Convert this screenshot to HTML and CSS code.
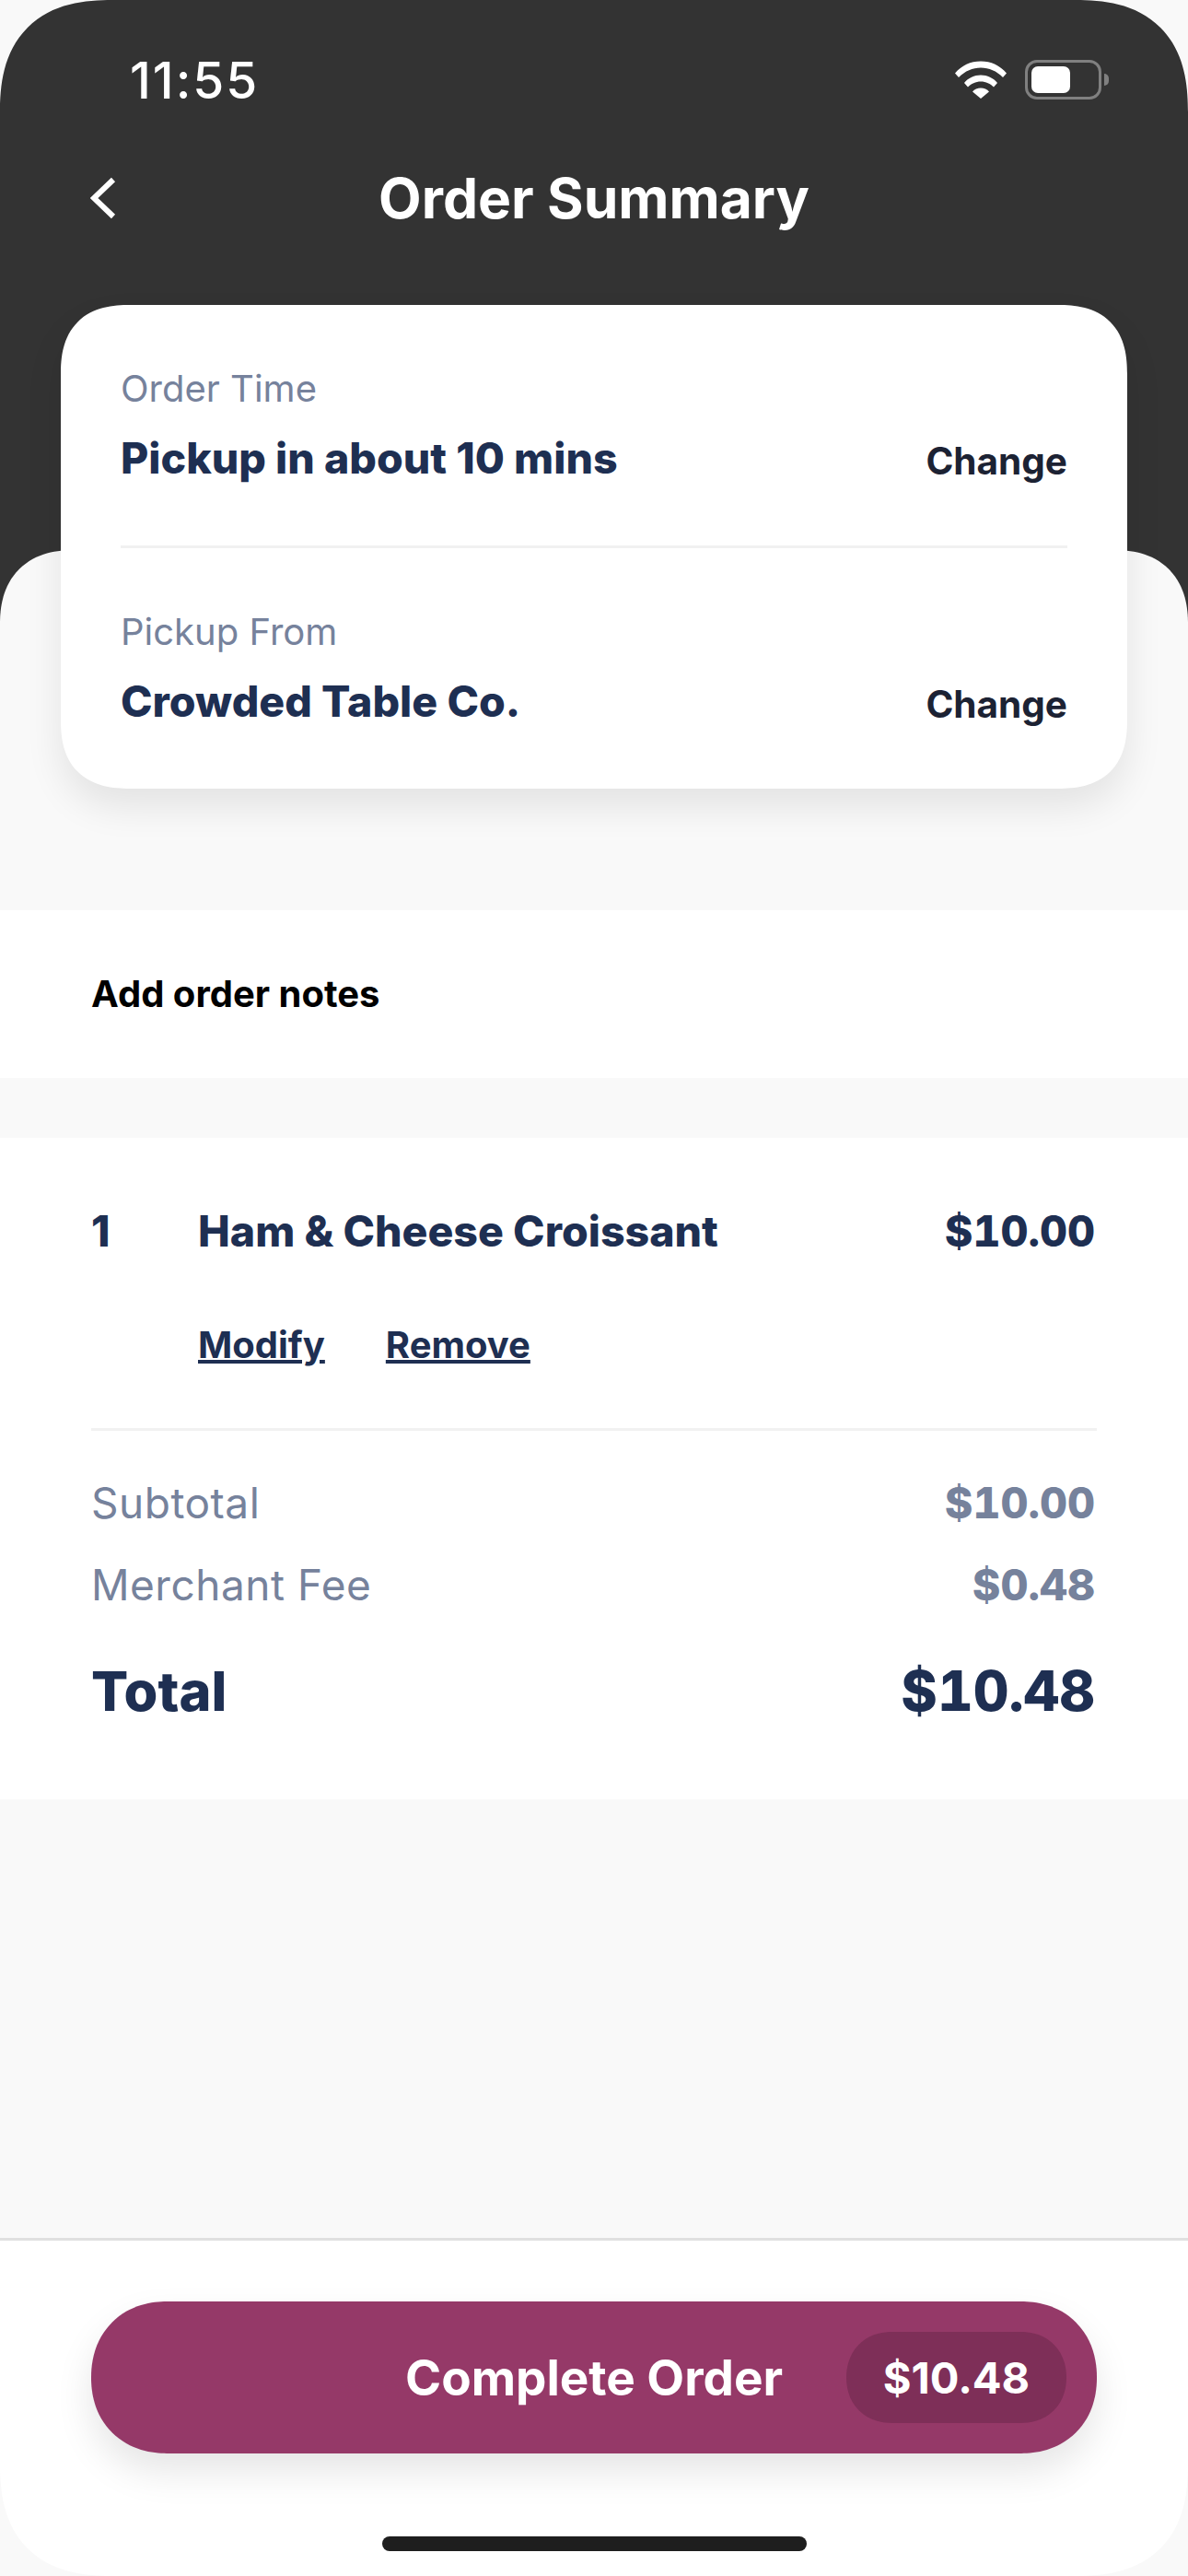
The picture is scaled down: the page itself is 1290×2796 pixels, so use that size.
FILE: index.html
```html
<!DOCTYPE html>
<html lang="en">
<head>
  <meta charset="UTF-8">
  <meta name="viewport" content="width=device-width, initial-scale=1.0">
  <title>Order Summary</title>
  <link rel="stylesheet" href="styles.css">
</head>
<body>
  <div class="screen">
    <header class="header">
      <div class="status-bar">
        <span class="clock">11:55</span>
        <div class="status-icons">
          <svg class="wifi" width="56" height="41" viewBox="0 0 56 41">
            <path d="M0 13.5C7 5 17 0.5 28 0.5S49 5 56 13.5L52 18C45 11 37 7.5 28 7.5S11 11 4 18Z" fill="#fff"/>
            <path d="M10 24C14.500 18.500 21 15.500 28 15.500S41.500 18.500 46 24L42 28.500C38.500 25 33.500 22.500 28 22.500S17.500 25 14 28.500Z" fill="#fff"/>
            <path d="M19 33.500C21 31 24.500 29.500 28 29.500S35 31 37 33.500L28 41Z" fill="#fff"/>
          </svg>
          <div class="battery"><div class="battery-level"></div></div>
          <div class="battery-cap"></div>
        </div>
      </div>
      <div class="nav-bar">
        <svg class="back" width="28" height="46" viewBox="0 0 28 46">
          <path d="M25 3L4 23L25 43" fill="none" stroke="#fff" stroke-width="6"/>
        </svg>
        <h1 class="nav-title">Order Summary</h1>
      </div>
    </header>

    <main class="panel">
      <section class="card">
        <div class="card-section">
          <div class="card-label">Order Time</div>
          <div class="card-row">
            <span class="card-value">Pickup in about 10 mins</span>
            <a class="change-link">Change</a>
          </div>
        </div>
        <div class="card-section">
          <div class="card-label">Pickup From</div>
          <div class="card-row">
            <span class="card-value">Crowded Table Co.</span>
            <a class="change-link">Change</a>
          </div>
        </div>
      </section>

      <section class="notes">Add order notes</section>

      <section class="order">
        <div class="item-row">
          <span class="item-qty">1</span>
          <span class="item-name">Ham &amp; Cheese Croissant</span>
          <span class="item-price">$10.00</span>
        </div>
        <div class="item-actions">
          <a class="item-link">Modify</a>
          <a class="item-link">Remove</a>
        </div>
        <div class="fee-row first">
          <span>Subtotal</span>
          <span class="fee-amount">$10.00</span>
        </div>
        <div class="fee-row">
          <span>Merchant Fee</span>
          <span class="fee-amount">$0.48</span>
        </div>
        <div class="total-row">
          <span>Total</span>
          <span class="total-amount">$10.48</span>
        </div>
      </section>
    </main>

    <footer class="footer">
      <button class="complete-btn">
        Complete Order
        <span class="btn-price">$10.48</span>
      </button>
      <div class="home-bar"></div>
    </footer>
  </div>
</body>
</html>
```

FILE: styles.css
```css
html {
  background-color: #f9f9f9;
}
body {
  margin: 0;
  font-family: "Inter", "Noto Sans", sans-serif;
}
a {
  cursor: pointer;
}
.screen {
  display: flex;
  flex-direction: column;
  height: 2796px;
  border-radius: 122px;
  corner-shape: superellipse(1.3);
  overflow: hidden;
}

/* top dark area */
.header {
  height: 700px;
  background-color: #333;
  color: #fff;
}
.status-bar {
  display: flex;
  justify-content: space-between;
  align-items: center;
  height: 173px;
  padding: 0 86px 0 141px;
}
.clock {
  font-size: 55px;
  font-weight: 500;
  letter-spacing: 2px;
}
.status-icons {
  display: flex;
  align-items: center;
}
.wifi {
  margin-right: 20px;
}
.battery {
  box-sizing: border-box;
  width: 83px;
  height: 43px;
  padding: 4px;
  border: 3.500px solid #808080;
  border-radius: 13px;
}
.battery-level {
  width: 42px;
  height: 100%;
  background-color: #fff;
  border-radius: 7px;
}
.battery-cap {
  width: 5px;
  height: 13px;
  margin-left: 3px;
  background-color: #808080;
  border-radius: 0 7px 7px 0;
}
.nav-bar {
  position: relative;
  display: flex;
  justify-content: center;
  align-items: center;
  height: 83px;
}
.back {
  position: absolute;
  left: 98px;
  top: 19px;
}
.nav-title {
  margin: 0;
  font-size: 60.500px;
  font-weight: 700;
}

/* light sheet */
.panel {
  flex: 1;
  margin-top: -103px;
  background-color: #f9f9f9;
  border-radius: 80px 80px 0 0;
  corner-shape: superellipse(1.2);
}
.card {
  margin: -266px 66px 132px;
  padding: 0 65px;
  background-color: #fff;
  border-radius: 75px;
  corner-shape: superellipse(1.3);
  box-shadow: 0 20px 40px rgba(0, 0, 0, 0.09);
}
.card-section {
  padding: 67px 0;
}
.card-section + .card-section {
  border-top: 3px solid #f1f1f1;
}
.card-label {
  font-size: 40px;
  line-height: 48px;
  color: #76829c;
}
.card-row {
  display: flex;
  justify-content: space-between;
  align-items: center;
  height: 56px;
  margin-top: 23px;
  line-height: 56px;
}
.card-value {
  font-size: 46.500px;
  font-weight: 800;
  color: #1e2f52;
}
.change-link {
  margin-top: 8px;
  font-size: 40.500px;
  font-weight: 700;
  color: #1c2233;
}
.notes {
  height: 182px;
  padding-left: 99px;
  line-height: 182px;
  font-size: 40px;
  font-weight: 700;
  color: #000;
  background-color: #fff;
}
.order {
  margin-top: 65px;
  padding: 71px 99px 80px;
  background-color: #fff;
  color: #1e2f52;
}
.item-row {
  display: flex;
  align-items: baseline;
  height: 60px;
  line-height: 60px;
  font-size: 46.500px;
  font-weight: 800;
}
.item-qty {
  width: 116px;
}
.item-name {
  flex: 1;
}
.item-price {
  margin-right: 2px;
  font-variant-numeric: tabular-nums;
}
.item-actions {
  display: flex;
  gap: 66px;
  margin: 69px 0 65px;
  padding: 0 0 0 116px;
  line-height: 50px;
}
.item-link {
  font-size: 40px;
  font-weight: 700;
  text-decoration: underline;
}
.fee-row {
  display: flex;
  justify-content: space-between;
  align-items: baseline;
  height: 56px;
  margin-top: 33px;
  font-size: 46px;
  line-height: 56px;
  letter-spacing: 0.5px;
  color: #76829c;
}
.fee-row.first {
  margin-top: 0;
  height: auto;
  padding-top: 50px;
  border-top: 3px solid #f1f1f1;
}
.fee-amount {
  margin-right: 2px;
  font-size: 46.500px;
  font-weight: 800;
  font-variant-numeric: tabular-nums;
  letter-spacing: 0;
}
.total-row {
  display: flex;
  justify-content: space-between;
  margin-top: 49px;
  font-size: 59.500px;
  line-height: 76px;
  font-weight: 800;
}
.total-amount {
  margin-right: 2px;
  font-size: 60px;
  font-variant-numeric: tabular-nums;
}

/* bottom bar */
.footer {
  height: 367px;
  box-sizing: border-box;
  padding: 66px 99px 0;
  background-color: #fff;
  border-top: 3px solid #e0e0e0;
}
.complete-btn {
  position: relative;
  display: block;
  width: 100%;
  height: 165px;
  padding: 0;
  border: none;
  border-radius: 82px;
  corner-shape: superellipse(1.1);
  background-color: #953968;
  color: #fff;
  font-family: inherit;
  font-size: 53px;
  font-weight: 700;
  box-shadow: 0 20px 40px rgba(0, 0, 0, 0.1);
}
.btn-price {
  position: absolute;
  top: 33px;
  right: 33px;
  width: 239px;
  height: 99px;
  line-height: 99px;
  font-size: 47px;
  background-color: #7e2f58;
  border-radius: 50px;
  corner-shape: superellipse(1.1);
}
.home-bar {
  width: 461px;
  height: 16px;
  margin: 90px auto 0;
  background-color: #1e1e1e;
  border-radius: 8px;
}
```
